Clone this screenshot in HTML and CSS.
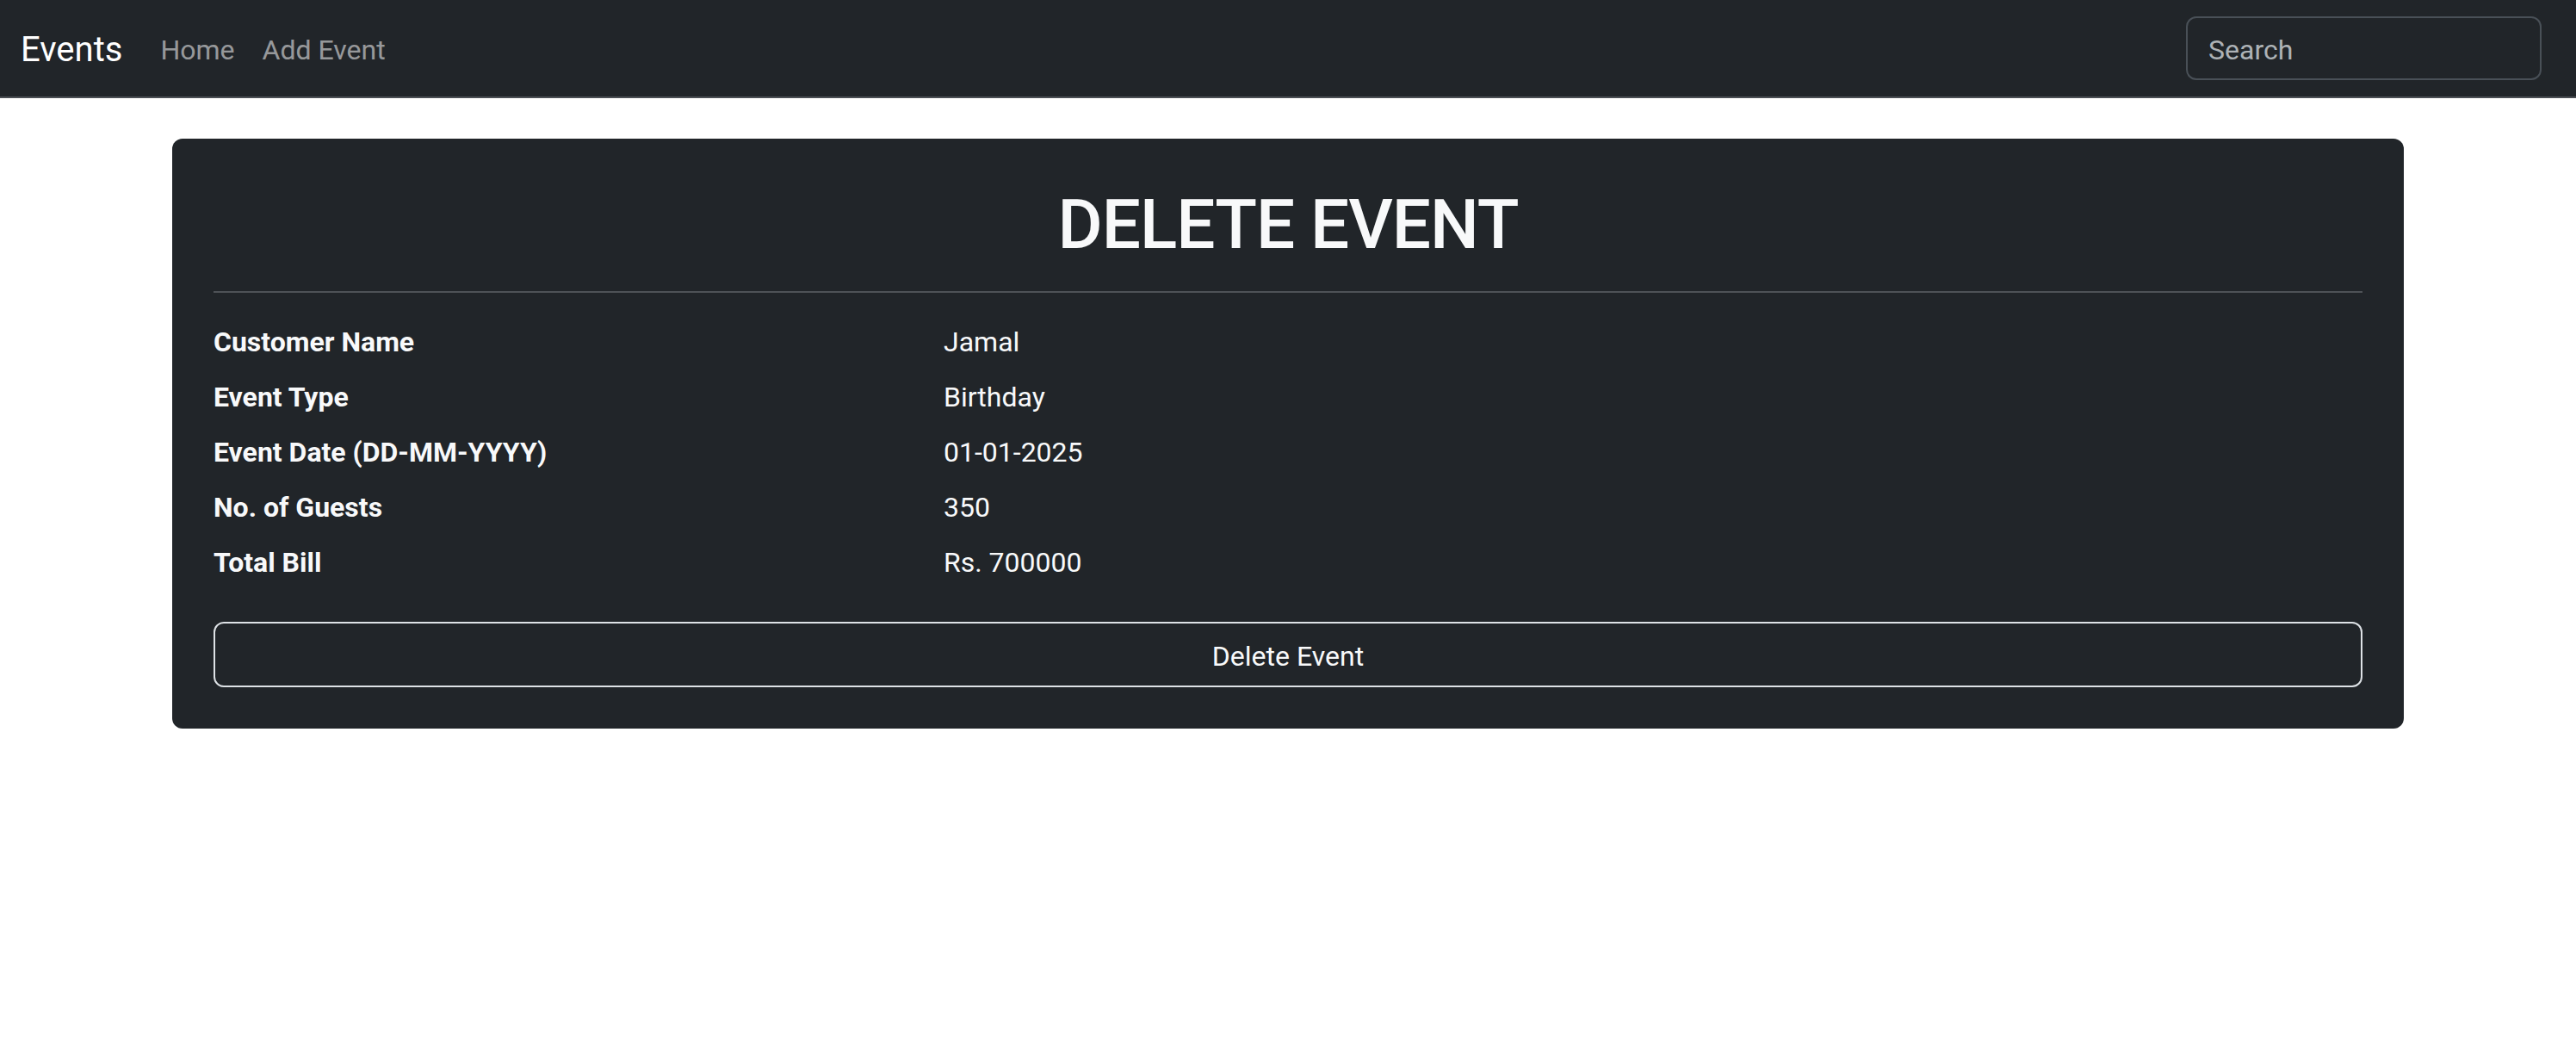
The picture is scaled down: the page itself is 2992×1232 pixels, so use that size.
FILE: index.html
```html
<!DOCTYPE html>
<html lang="en">
<head>
<meta charset="utf-8">
<title>Delete Event</title>
<link rel="stylesheet" href="styles.css">
</head>
<body>
<nav class="navbar">
  <a class="brand" href="#">Events</a>
  <div class="nav-links">
    <a class="nav-link" href="#">Home</a>
    <a class="nav-link" href="#">Add Event</a>
  </div>
  <input class="search" type="search" placeholder="Search">
</nav>
<main class="page">
  <section class="card">
    <h1 class="card-title">DELETE EVENT</h1>
    <hr class="divider">
    <div class="details">
      <div class="row"><span class="label">Customer Name</span><span class="value">Jamal</span></div>
      <div class="row"><span class="label">Event Type</span><span class="value">Birthday</span></div>
      <div class="row"><span class="label">Event Date (DD-MM-YYYY)</span><span class="value">01-01-2025</span></div>
      <div class="row"><span class="label">No. of Guests</span><span class="value">350</span></div>
      <div class="row"><span class="label">Total Bill</span><span class="value">Rs. 700000</span></div>
    </div>
    <button class="btn-delete" type="button">Delete Event</button>
  </section>
</main>
</body>
</html>
```
FILE: styles.css
```css
* { box-sizing: border-box; }
body {
  margin: 0;
  font-family: Roboto, "Noto Sans", "Liberation Sans", sans-serif;
  font-size: 32px;
  line-height: 1.5;
  color: #212529;
  background: #fff;
}
.navbar {
  display: flex;
  align-items: center;
  height: 114px;
  padding: 0 40px 0 24px;
  background: #212529;
  border-bottom: 2px solid #4b4f54;
}
.brand {
  font-size: 40px;
  color: #fff;
  text-decoration: none;
  margin-right: 28px;
  padding-top: 4px;
}
.nav-links { display: flex; padding-top: 4px; }
.nav-link {
  padding: 0 16px;
  color: rgba(255,255,255,0.55);
  text-decoration: none;
}
.search {
  margin-left: auto;
  width: 413px;
  height: 74px;
  padding: 4px 24px 0;
  border: 2px solid #495057;
  border-radius: 12px;
  background: #212529;
  color: #dee2e6;
  font-family: inherit;
  font-size: 32px;
  outline: none;
}
.search::placeholder { color: rgba(222,226,230,0.75); }
.page { padding: 47px 200px 0; }
.card {
  background: #212529;
  border-radius: 12px;
  padding: 48px;
  color: #f8f9fa;
}
.card-title {
  margin: 0;
  padding-top: 8px;
  font-size: 80px;
  font-weight: 500;
  line-height: 89px;
  letter-spacing: -1px;
  text-align: center;
}
.divider {
  margin: 32px 0;
  border: 0;
  border-top: 2px solid #4e5257;
}
.details {
  display: flex;
  flex-direction: column;
  gap: 16px;
  padding-top: 1px;
}
.row {
  display: grid;
  grid-template-columns: 800px 1fr;
  column-gap: 48px;
  line-height: 48px;
}
.label { font-weight: 700; }
.btn-delete {
  display: block;
  width: 100%;
  margin-top: 45px;
  padding: 14px 24px 10px;
  line-height: 48px;
  font-family: inherit;
  font-size: 32px;
  color: #f8f9fa;
  background: transparent;
  border: 2px solid #dee2e6;
  border-radius: 12px;
}
```
